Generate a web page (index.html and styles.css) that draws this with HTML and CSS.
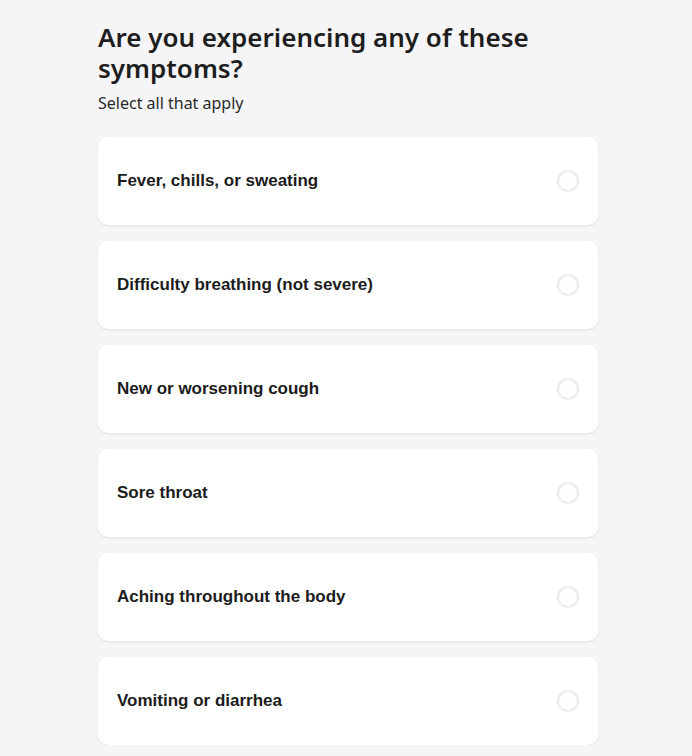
FILE: index.html
```html
<!DOCTYPE html>
<html lang="en">
<head>
<meta charset="utf-8">
<title>Symptoms</title>
<link rel="stylesheet" href="styles.css">
</head>
<body>
<main class="page">
  <h1 class="title">Are you experiencing any of these symptoms?</h1>
  <p class="subtitle">Select all that apply</p>
  <ul class="options">
    <li class="option"><span class="label">Fever, chills, or sweating</span><span class="radio"></span></li>
    <li class="option"><span class="label">Difficulty breathing (not severe)</span><span class="radio"></span></li>
    <li class="option"><span class="label">New or worsening cough</span><span class="radio"></span></li>
    <li class="option"><span class="label">Sore throat</span><span class="radio"></span></li>
    <li class="option"><span class="label">Aching throughout the body</span><span class="radio"></span></li>
    <li class="option"><span class="label">Vomiting or diarrhea</span><span class="radio"></span></li>
  </ul>
</main>
</body>
</html>
```

FILE: styles.css
```css
html, body {
  margin: 0;
  padding: 0;
  background: #f5f5f7;
}
body {
  font-family: "Noto Sans", "Open Sans", sans-serif;
  color: #1b1b1b;
}
.page {
  width: 500px;
  margin: 0 0 0 98px;
  padding-top: 22px;
}
.title {
  margin: 0;
  font-size: 26px;
  line-height: 31px;
  font-weight: 600;
  color: #1e1e1e;
  letter-spacing: 0;
}
.subtitle {
  margin: 8px 0 0;
  font-size: 16px;
  line-height: 22px;
  font-weight: 400;
  color: #2a2a2a;
}
.options {
  list-style: none;
  margin: 23px 0 0;
  padding: 0;
  display: flex;
  flex-direction: column;
  gap: 16px;
}
.option {
  height: 88px;
  box-sizing: border-box;
  background: #ffffff;
  border-radius: 10px;
  box-shadow: 0 1px 3px rgba(0, 0, 0, 0.08);
  display: flex;
  align-items: center;
  justify-content: space-between;
  padding: 0 19px 0 19px;
}
.label {
  font-family: "Liberation Sans", Arial, sans-serif;
  font-weight: 700;
  font-size: 17px;
  color: #1c1c1c;
}
.radio {
  width: 22px;
  height: 22px;
  box-sizing: border-box;
  border: 2px solid #ebebeb;
  border-radius: 50%;
}
```
